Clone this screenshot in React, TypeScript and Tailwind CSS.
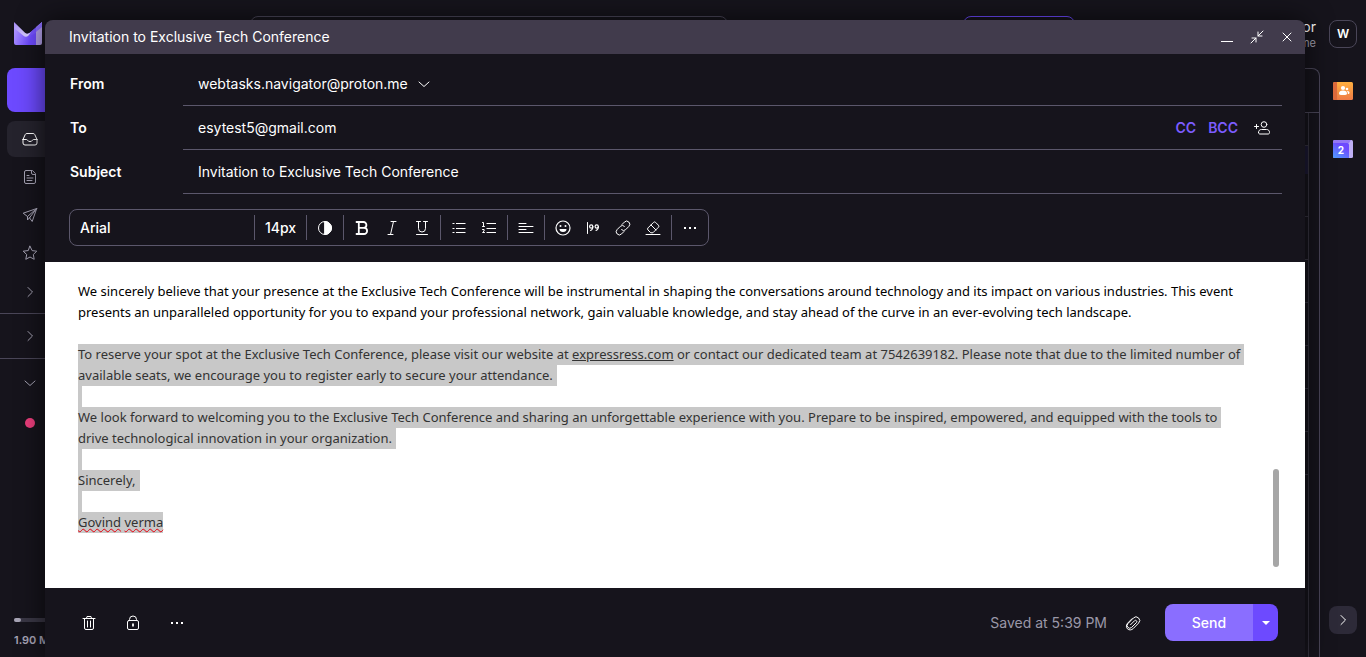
import React, { ReactNode } from "react";

const Icon = ({ children, className = "size-4" }: { children: ReactNode; className?: string }) => (
  <svg
    viewBox="0 0 16 16"
    className={className}
    fill="none"
    stroke="currentColor"
    strokeWidth="1"
    strokeLinecap="round"
    strokeLinejoin="round"
    aria-hidden="true"
  >
    {children}
  </svg>
);

const ChevronRight = () => (
  <Icon>
    <path d="M6 3.500 10.500 8 6 12.500" />
  </Icon>
);
const ChevronDown = () => (
  <Icon>
    <path d="M3 6l5 4.500L13 6" />
  </Icon>
);
const Dots = () => (
  <Icon>
    <g fill="currentColor" stroke="none">
      <rect x="2" y="7" width="2" height="2" />
      <rect x="7" y="7" width="2" height="2" />
      <rect x="12" y="7" width="2" height="2" />
    </g>
  </Icon>
);

const Logo = () => (
  <svg viewBox="0 0 28 24" className="h-6 w-7" aria-hidden="true">
    <defs>
      <linearGradient id="flap" x1="0" y1="0" x2="1" y2="1">
        <stop offset="0" stopColor="#a58cf5" />
        <stop offset="1" stopColor="#e0d8ff" />
      </linearGradient>
      <linearGradient id="body" x1="0" y1=".3" x2="1" y2=".6">
        <stop offset="0" stopColor="#ad94ff" />
        <stop offset=".8" stopColor="#6d4aff" />
      </linearGradient>
    </defs>
    <path d="M0 5v17a2 2 0 0 0 2 2h20V6.500L15.500 12a4 4 0 0 1-5 0z" fill="url(#body)" />
    <path d="M28 1 15.500 12a4 4 0 0 1-3 1l2 2.500L22 12z" fill="#7654ff" />
    <path d="M0 1v6l9.500 7.800a4 4 0 0 0 4.800 0l2.700-3.600-1.500.8a4 4 0 0 1-4.500-.3z" fill="url(#flap)" />
    <path d="M28 1 22 6.200V24h4a2 2 0 0 0 2-2z" fill="#b3a1ea" />
    <path d="M28 1 22 6.200V11l6-5z" fill="#8b6eff" />
  </svg>
);

const NavItem = ({ label, active, children }: { label: string; active?: boolean; children: ReactNode }) => (
  <a
    href="#"
    aria-label={label}
    className={
      active
        ? "flex h-9 items-center rounded-lg bg-[#25232d] pl-[15px] text-white"
        : "flex h-9 items-center rounded-lg pl-[15px] text-[#a7a4b5]"
    }
  >
    {children}
  </a>
);

const Sidebar = () => (
  <nav className="flex w-56 shrink-0 flex-col pt-[21px]">
    <div className="pl-3.5">
      <Logo />
    </div>
    <button aria-label="New message" className="mt-[23px] ml-[7px] h-11 rounded-lg bg-[#6d4aff]" />
    <div className="mt-[9px] ml-[7px] flex flex-col gap-0.5">
      <NavItem label="Inbox" active>
        <Icon>
          <path d="M1 8.500v3.500a2 2 0 0 0 2 2h10a2 2 0 0 0 2-2V8.500M1 8.500 3.200 3.600A1.800 1.800 0 0 1 4.900 2.500h6.200a1.800 1.800 0 0 1 1.700 1.100L15 8.500M1 8.500h3.500c.5 0 .8.300 1 .7A2.600 2.600 0 0 0 8 10.500a2.600 2.600 0 0 0 2.500-1.300c.200-.4.500-.7 1-.7H15" />
        </Icon>
      </NavItem>
      <NavItem label="Drafts">
        <Icon>
          <path d="M10 1.500H4a1.500 1.500 0 0 0-1.500 1.500v10A1.500 1.500 0 0 0 4 14.500h8a1.500 1.500 0 0 0 1.500-1.500V5zM9.500 1.500V4a1.500 1.500 0 0 0 1.500 1.500h2.500M5 6.500h2M5 9h6M5 11.500h5" />
        </Icon>
      </NavItem>
      <NavItem label="Sent">
        <Icon>
          <path d="M14.700 1.500 1.200 6.200l4.300 3.300M14.700 1.500 10.200 14.500 7.500 10.800M14.700 1.500 5.500 9.500v3.500l2-2.200M14.700 1.500l-7.200 9.300" />
        </Icon>
      </NavItem>
      <NavItem label="Starred">
        <Icon>
          <path d="m8 1.200 2.100 4.400 4.700.6-3.500 3.300.9 4.800L8 12l-4.200 2.300.9-4.800L1.200 6.200l4.700-.6z" />
        </Icon>
      </NavItem>
    </div>
    <button aria-label="More" className="flex h-[43px] items-center border-b border-[#4a4658] pl-[22px] text-[#a7a4b5]">
      <ChevronRight />
    </button>
    <button aria-label="Folders" className="flex h-[45px] items-center border-b border-[#4a4658] pl-[22px] text-[#a7a4b5]">
      <ChevronRight />
    </button>
    <button aria-label="Labels" className="flex h-12 items-center pl-[22px] text-[#a7a4b5]">
      <ChevronDown />
    </button>
    <div className="mt-[11px] ml-[25px] size-2.5 rounded-full bg-[#ec3e7c]" />
    <div className="mt-auto pb-[9px] pl-3.5">
      <div className="h-1 rounded bg-[#3a3745]">
        <div className="h-1 w-[7px] rounded bg-[#a7a4b5]" />
      </div>
      <p className="mt-2.5 text-[11px] leading-4 font-semibold text-[#a7a4b5]">1.90 MB</p>
    </div>
  </nav>
);

const Mailbox = () => (
  <div className="flex min-w-0 flex-1 flex-col">
    <header className="flex h-[68px] shrink-0 items-start justify-between pt-4">
      <div className="ml-[26px] h-9 w-[478px] rounded-lg border border-[#4a4658]" />
      <div className="ml-auto h-9 w-28 rounded-lg border border-[#6d4aff]" />
      <div className="ml-[43px] w-[202px] pt-0.5 pr-1 text-right whitespace-nowrap">
        <p className="text-sm leading-[18px] text-white">webtasks.navigator</p>
        <p className="text-[11px] leading-[14px] text-[#a7a4b5]">webtasks.navigator@proton.me</p>
      </div>
    </header>
    <main className="flex-1 rounded-tr-lg border-t border-r border-[#4a4658]">
      <div className="h-11 border-b border-[#4a4658]" />
      <div className="mr-2.5 h-full border-r border-[#35323f]">
        <div className="h-[33px] border-b border-[#35323f]" />
        <div className="h-7 bg-[#1c1934]" />
        {[0, 1, 2, 3, 4, 5, 6].map((row) => (
          <div key={row} className="h-[43px] border-b border-[#35323f]" />
        ))}
      </div>
    </main>
  </div>
);

const Rail = () => (
  <aside className="flex w-[46px] shrink-0 flex-col items-center pt-5 pb-[23px]">
    <button aria-label="Account" className="size-7 rounded-lg border border-[#4a4658] text-xs font-semibold text-white">
      W
    </button>
    <a href="#" aria-label="Contacts" className="mt-[34px]">
      <svg viewBox="0 0 20 18" className="h-[18px] w-5">
        <defs>
          <linearGradient id="contacts" x1="0" y1="0" x2="0" y2="1">
            <stop offset="0" stopColor="#ffb040" />
            <stop offset="1" stopColor="#ee7a45" />
          </linearGradient>
        </defs>
        <rect width="20" height="18" rx="1.500" fill="url(#contacts)" />
        <path d="M1.500 0H4v18H1.500A1.500 1.500 0 0 1 0 16.500v-15A1.500 1.500 0 0 1 1.500 0z" fill="#dd6a3c" />
        <circle cx="10" cy="6" r="2.100" fill="#fff" />
        <path d="M6 11.500c0-2 1.500-3 4-3s4 1 4 3c0 1-1 1.500-4 1.500s-4-.5-4-1.500z" fill="#fff" />
        <circle cx="14" cy="7" r="1.300" fill="#fff" />
        <path d="M14 9c1.500 0 2.500.5 2.500 1.700 0 .800-.6 1.300-1.700 1.300C15 10.500 14.700 9.700 13.500 9z" fill="#fff" />
      </svg>
    </a>
    <a href="#" aria-label="Calendar" className="mt-10">
      <svg viewBox="0 0 20 18" className="h-[18px] w-5">
        <defs>
          <linearGradient id="calendar" x1=".7" y1="0" x2="0" y2="1">
            <stop offset=".2" stopColor="#6d4aff" />
            <stop offset="1" stopColor="#4fa0ff" />
          </linearGradient>
        </defs>
        <rect width="20" height="18" rx="1.500" fill="#bfb0f5" />
        <path d="M0 1.500A1.500 1.500 0 0 1 1.500 0H18l-2 3H0z" fill="#9478f5" />
        <path d="M0 3h14.500A1.500 1.500 0 0 1 16 4.500V18H1.500A1.500 1.500 0 0 1 0 16.500z" fill="url(#calendar)" />
        <text x="8" y="14" textAnchor="middle" fill="#fff" fontSize="10" fontWeight="700" fontFamily="Inter">
          2
        </text>
      </svg>
    </a>
    <button aria-label="Show side panel" className="mt-auto flex size-7 items-center justify-center rounded-lg bg-[#2d2a38] text-white">
      <ChevronRight />
    </button>
  </aside>
);

const ToolGroup = ({ children }: { children: ReactNode }) => (
  <div className="flex h-full items-center">
    <span className="h-[25px] w-px bg-[#5b576b]" />
    <div className="flex px-[3px]">{children}</div>
  </div>
);

const Tool = ({ label, children }: { label: string; children: ReactNode }) => (
  <button aria-label={label} className="flex h-[30px] w-[30px] items-center justify-center">
    {children}
  </button>
);

const FormatBar = () => (
  <div className="flex h-[37px] w-[640px] items-center rounded-lg border border-[#5b576b]">
    <select aria-label="Font" defaultValue="Arial" className="h-full w-[184px] appearance-none bg-transparent pl-2.5 text-sm font-medium">
      <option>Arial</option>
    </select>
    <span className="h-[25px] w-px bg-[#5b576b]" />
    <select aria-label="Font size" defaultValue="14px" className="h-full w-[51px] appearance-none bg-transparent pl-2.5 text-sm font-medium">
      <option>14px</option>
    </select>
    <ToolGroup>
      <Tool label="Text colour">
        <Icon>
          <circle cx="8" cy="8" r="6.500" />
          <path d="M8 1.500a6.500 6.500 0 0 1 0 13z" fill="currentColor" />
        </Icon>
      </Tool>
    </ToolGroup>
    <ToolGroup>
      <Tool label="Bold">
        <Icon>
          <path d="M2.500 2h7a2.900 2.900 0 0 1 0 5.800H5M5 7.800h5a3.100 3.100 0 0 1 0 6.200H2.500M4.800 2v12" strokeWidth="1.800" />
        </Icon>
      </Tool>
      <Tool label="Italic">
        <Icon>
          <path d="M7 1.500h5M4 14.500h5M9.500 1.500l-3 13" />
        </Icon>
      </Tool>
      <Tool label="Underline">
        <Icon>
          <path d="M2.500 1.500h4M9.500 1.500h4M4.500 1.500v7a3.500 3.500 0 0 0 7 0v-7M2.500 14.500h11" />
        </Icon>
      </Tool>
    </ToolGroup>
    <ToolGroup>
      <Tool label="Bulleted list">
        <Icon>
          <path d="M5 3.500h9.500M5 8.500h9.500M5 12.500h9.500" strokeLinecap="butt" />
          <path d="M1.500 3.500h2M1.500 8.500h2M1.500 12.500h2" strokeLinecap="butt" />
        </Icon>
      </Tool>
      <Tool label="Numbered list">
        <Icon>
          <path d="M5.500 3.500H15M5.500 8.500H15M5.500 12.500H15" strokeLinecap="butt" />
          <path d="M1.500 2.500h1v4M1.500 6.500h2M1.500 9.500h1.600V11L1.500 12.500h2" />
        </Icon>
      </Tool>
    </ToolGroup>
    <ToolGroup>
      <Tool label="Align left">
        <Icon>
          <path d="M1 3.500h7M1 6.500h14M1 9.500h7M1 12.500h14" />
        </Icon>
      </Tool>
    </ToolGroup>
    <ToolGroup>
      <Tool label="Emoji">
        <Icon>
          <circle cx="8" cy="8" r="7" strokeWidth="1.200" />
          <circle cx="5.500" cy="6" r="1" fill="currentColor" stroke="none" />
          <circle cx="10.500" cy="6" r="1" fill="currentColor" stroke="none" />
          <path d="M4.500 9h7a3.500 3 0 0 1-7 0z" fill="currentColor" stroke="none" />
        </Icon>
      </Tool>
      <Tool label="Quote">
        <Icon>
          <path d="M2.500 2.500v11" />
          <circle cx="6.200" cy="6.500" r="1.600" strokeWidth="1.200" />
          <circle cx="11.700" cy="6.500" r="1.600" strokeWidth="1.200" />
          <path d="M7.900 6.500c0 2-.6 3.300-2.300 4M13.400 6.500c0 2-.6 3.300-2.300 4" strokeWidth="1.200" />
        </Icon>
      </Tool>
      <Tool label="Link">
        <Icon>
          <path d="m7 4.500 2.400-2.400a3 3 0 0 1 4.500 4.300L10.600 9.700a2.900 2.900 0 0 1-4 0M9 11.500l-2.400 2.400a3 3 0 0 1-4.500-4.300l3.300-3.300a2.900 2.900 0 0 1 4 0" />
        </Icon>
      </Tool>
      <Tool label="Clear formatting">
        <Icon>
          <path d="M1 14.500h14M5.500 12.500 3 10a1.500 1.500 0 0 1 0-2.100l5.500-5.500a1.500 1.500 0 0 1 2.100 0l2.800 2.800a1.500 1.500 0 0 1 0 2.100l-5.200 5.200zM6 5l5 5" />
        </Icon>
      </Tool>
    </ToolGroup>
    <ToolGroup>
      <Tool label="More options">
        <Dots />
      </Tool>
    </ToolGroup>
  </div>
);

const Field = ({ label, id, children }: { label: string; id: string; children: ReactNode }) => (
  <div className="flex h-11 items-stretch">
    <label htmlFor={id} className="flex w-[113px] items-center text-sm font-semibold">
      {label}
    </label>
    <div className="flex flex-1 items-center border-b border-[#5b576b] pl-[15px] text-sm">{children}</div>
  </div>
);

const Selected = ({ children }: { children?: ReactNode }) => (
  <div className="h-[21px] w-fit bg-[#c8c8c8] pr-1 text-[#333]">{children}</div>
);

const Composer = () => (
  <section
    role="dialog"
    aria-label="Invitation to Exclusive Tech Conference"
    className="absolute top-5 right-[61px] bottom-0 left-[45px] flex flex-col rounded-t-lg bg-[#16141c] text-white shadow-[0_0_28px_rgba(0,0,0,0.65)]"
  >
    <header className="flex h-[34px] shrink-0 items-center rounded-t-lg bg-[#413b4c] pr-[3px] pl-6">
      <h1 className="flex-1 text-sm">Invitation to Exclusive Tech Conference</h1>
      <Tool label="Minimize">
        <Icon>
          <path d="M2 12.500h12" strokeLinecap="butt" />
        </Icon>
      </Tool>
      <Tool label="Shrink">
        <Icon>
          <path d="M14 2 9 7M9 3v4h4M2 14l5-5M3 9h4v4" />
        </Icon>
      </Tool>
      <Tool label="Close">
        <Icon>
          <path d="m4 4 8 8M12 4l-8 8" />
        </Icon>
      </Tool>
    </header>
    <div className="shrink-0 pt-2 pr-[23px] pl-[25px]">
      <Field label="From" id="from">
        <button id="from" className="flex items-center gap-2">
          webtasks.navigator@proton.me
          <ChevronDown />
        </button>
      </Field>
      <Field label="To" id="to">
        <input id="to" defaultValue="esytest5@gmail.com" className="min-w-0 flex-1 bg-transparent outline-none" />
        <button className="font-semibold text-[#7c5cff]">CC</button>
        <button className="ml-3 font-semibold text-[#7c5cff]">BCC</button>
        <button aria-label="Add contacts" className="mr-3 ml-4">
          <Icon>
            <circle cx="10" cy="4.500" r="2.800" />
            <path d="M4.500 12.500c0-2 1.200-3 3-3h5c1.800 0 3 1 3 3 0 1-.5 1.500-1.500 1.500H6c-1 0-1.500-.5-1.500-1.500zM.5 6.500h4M2.500 4.500v4" />
          </Icon>
        </button>
      </Field>
      <Field label="Subject" id="subject">
        <input id="subject" defaultValue="Invitation to Exclusive Tech Conference" className="min-w-0 flex-1 bg-transparent outline-none" />
      </Field>
    </div>
    <div className="shrink-0 px-6 pt-[15px] pb-4">
      <FormatBar />
    </div>
    <div className="relative min-h-0 flex-1 bg-white">
      <div
        role="textbox"
        aria-label="Message body"
        className="h-full overflow-hidden pt-[19px] pl-[33px] font-['Noto_Sans',sans-serif] text-[13px] leading-[21px] whitespace-nowrap text-black"
      >
        <div>We sincerely believe that your presence at the Exclusive Tech Conference will be instrumental in shaping the conversations around technology and its impact on various industries. This event</div>
        <div>presents an unparalleled opportunity for you to expand your professional network, gain valuable knowledge, and stay ahead of the curve in an ever-evolving tech landscape.</div>
        <div className="h-[21px]" />
        <Selected>
          To reserve your spot at the Exclusive Tech Conference, please visit our website at{" "}
          <a href="#" className="underline">expressress.com</a> or contact our dedicated team at 7542639182. Please note that due to the limited number of
        </Selected>
        <Selected>available seats, we encourage you to register early to secure your attendance.</Selected>
        <Selected />
        <Selected>We look forward to welcoming you to the Exclusive Tech Conference and sharing an unforgettable experience with you. Prepare to be inspired, empowered, and equipped with the tools to</Selected>
        <Selected>drive technological innovation in your organization.</Selected>
        <Selected />
        <Selected>Sincerely,</Selected>
        <Selected />
        <div className="h-[21px] w-fit bg-[#c8c8c8] text-[#333]">
          <span className="underline decoration-red-600 decoration-wavy decoration-1">Govind</span>{" "}
          <span className="underline decoration-red-600 decoration-wavy decoration-1">verma</span>
        </div>
      </div>
      <div className="absolute right-[26px] bottom-[21px] h-[98px] w-1.5 rounded-full bg-[#a6a6a6]" />
    </div>
    <footer className="flex h-[69px] shrink-0 items-center pr-[27px] pl-[22px]">
      <button aria-label="Delete draft" className="flex h-9 w-11 items-center justify-center">
        <Icon>
          <path d="M2 3.500h12M5.500 3.500l.5-2h4l.5 2M3.500 3.500V13A1.500 1.500 0 0 0 5 14.500h6a1.500 1.500 0 0 0 1.500-1.500V3.500M6.500 6v6M9.500 6v6" />
        </Icon>
      </button>
      <button aria-label="Encryption" className="flex h-9 w-11 items-center justify-center">
        <Icon>
          <rect x="2.500" y="5.500" width="11" height="9" rx="1.500" />
          <path d="M4.500 5.500V4.500a3.500 3.500 0 0 1 7 0v1" />
          <path d="M8 8.500v3" strokeWidth="1.800" strokeLinecap="butt" />
        </Icon>
      </button>
      <button aria-label="More actions" className="flex h-9 w-11 items-center justify-center">
        <Dots />
      </button>
      <p className="ml-auto text-sm text-[#9b98a8]">Saved at 5:39 PM</p>
      <button aria-label="Attach file" className="flex h-9 w-[52px] items-center justify-center">
        <Icon>
          <path d="M5.500 9.800 9.600 5.700a1.300 1.300 0 0 1 1.800 1.900L6.600 12.400a2.600 2.600 0 0 1-3.700-3.700l5.500-5.700a3.600 3.600 0 0 1 5.200 5.100L8.300 13.500c-1.700 1.700-4.300 1.900-5.800.4S1 9.900 2.500 8.300L7 3.700" />
        </Icon>
      </button>
      <div className="ml-1.5 flex h-[37px] overflow-hidden rounded-lg">
        <button className="w-22 bg-[#8a6eff] text-sm font-medium">Send</button>
        <button aria-label="Send options" className="flex w-[25px] items-center justify-center bg-[#6d4aff]">
          <svg viewBox="0 0 8 4" className="h-1 w-2" fill="currentColor" aria-hidden="true">
            <path d="M0 0h8L4 4z" />
          </svg>
        </button>
      </div>
    </footer>
  </section>
);

export default function App() {
  return (
    <div className="relative flex h-screen overflow-hidden bg-[#16141c] font-['Inter',sans-serif]">
      <Sidebar />
      <Mailbox />
      <Rail />
      <Composer />
    </div>
  );
}
